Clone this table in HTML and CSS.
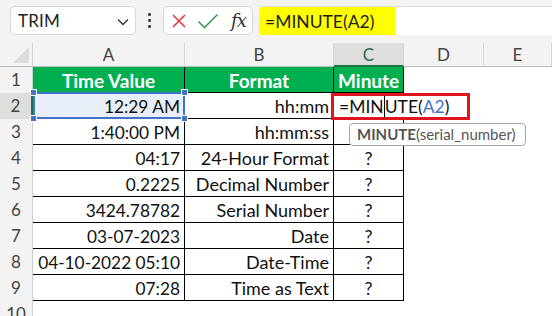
FILE: index.html
```html
<!DOCTYPE html>
<html>
<head>
<meta charset="utf-8">
<link rel="stylesheet" href="styles.css">
</head>
<body>
<div class="app">
  <div class="toolbar">
    <div class="namebox">
      <span class="name">TRIM</span>
      <svg class="chev" width="12" height="8" viewBox="0 0 12 8"><path d="M1 1.5 L6 6.5 L11 1.5" fill="none" stroke="#333" stroke-width="1.4"/></svg>
    </div>
    <div class="dots"><span></span><span></span><span></span></div>
    <div class="btns">
      <svg width="16" height="16" viewBox="0 0 16 16"><path d="M2 2 L14 14 M14 2 L2 14" stroke="#e0383a" stroke-width="1.6" fill="none"/></svg>
      <svg width="22" height="16" viewBox="0 0 22 16"><path d="M1.5 8.5 L7.5 14.5 L20.5 1.5" stroke="#3f9a5a" stroke-width="1.6" fill="none"/></svg>
      <span class="fx">fx</span>
    </div>
    <div class="formula"><span class="hl">=MINUTE(A2)</span></div>
  </div>
  <div class="sheet">
    <div class="corner"><div class="tri"></div></div>
    <div class="ch">A</div><div class="ch">B</div><div class="ch sel">C</div><div class="ch">D</div><div class="ch">E</div>

    <div class="rh">1</div>
    <div class="c hd">Time Value</div><div class="c hd">Format</div><div class="c hd">Minute</div><div class="e"></div><div class="e"></div>

    <div class="rh sel">2</div>
    <div class="c r n a2">12:29 AM</div><div class="c r">hh:mm</div><div class="c ctr"></div><div class="e"></div><div class="e"></div>

    <div class="rh">3</div>
    <div class="c r n">1:40:00 PM</div><div class="c r">hh:mm:ss</div><div class="c ctr"></div><div class="e"></div><div class="e"></div>

    <div class="rh">4</div>
    <div class="c r n">04:17</div><div class="c r">24-Hour Format</div><div class="c ctr">?</div><div class="e"></div><div class="e"></div>

    <div class="rh">5</div>
    <div class="c r n">0.2225</div><div class="c r">Decimal Number</div><div class="c ctr">?</div><div class="e"></div><div class="e"></div>

    <div class="rh">6</div>
    <div class="c r n">3424.78782</div><div class="c r">Serial Number</div><div class="c ctr">?</div><div class="e"></div><div class="e"></div>

    <div class="rh">7</div>
    <div class="c r n">03-07-2023</div><div class="c r">Date</div><div class="c ctr">?</div><div class="e"></div><div class="e"></div>

    <div class="rh">8</div>
    <div class="c r n">04-10-2022 05:10</div><div class="c r">Date-Time</div><div class="c ctr">?</div><div class="e"></div><div class="e"></div>

    <div class="rh">9</div>
    <div class="c r n">07:28</div><div class="c r">Time as Text</div><div class="c ctr">?</div><div class="e"></div><div class="e"></div>

    <div class="rh">10</div>
    <div class="e"></div><div class="e"></div><div class="e"></div><div class="e"></div><div class="e"></div>

    <div class="refbox"><i class="h tl"></i><i class="h tr"></i><i class="h bl"></i><i class="h br"></i></div>
    <div class="editor">=MIN<span class="caret"></span>UTE(<span class="ref">A2</span>)</div>
    <div class="tip"><b>MINUTE</b>(serial_number)</div>
  </div>
</div>
</body>
</html>
```
FILE: styles.css
```css
html, body {
  margin: 0;
  padding: 0;
  background: #fff;
}
.app {
  width: 552px;
  height: 316px;
  overflow: hidden;
  font-family: Lato, "Open Sans", sans-serif;
  color: #222;
}
.toolbar {
  height: 43px;
  box-sizing: border-box;
  background: #f3f3f3;
  display: flex;
  align-items: flex-start;
  padding: 6px 0 0 10px;
}
.namebox {
  width: 126px;
  height: 29px;
  box-sizing: border-box;
  background: #fff;
  border: 1px solid #d6d6d6;
  border-radius: 5px;
  display: flex;
  align-items: center;
  justify-content: space-between;
  padding: 0 6px 0 7px;
}
.name {
  font-size: 17px;
  color: #222;
  letter-spacing: 0.2px;
}
.chev {
  margin-top: 2px;
}
.dots {
  width: 27px;
  height: 29px;
  display: flex;
  flex-direction: column;
  align-items: center;
  justify-content: center;
  gap: 3px;
}
.dots span {
  width: 3px;
  height: 3px;
  background: #444;
  border-radius: 1px;
}
.btns {
  width: 90px;
  height: 29px;
  box-sizing: border-box;
  background: #fff;
  border: 1px solid #d6d6d6;
  border-radius: 5px;
  display: flex;
  align-items: center;
  padding: 0 4px 0 7px;
  gap: 10px;
}
.fx {
  font-family: "DejaVu Serif", "Liberation Serif", serif;
  font-style: italic;
  font-size: 18px;
  color: #333;
  margin-left: 2px;
  letter-spacing: -1px;
}
.formula {
  flex: 1;
  height: 29px;
  margin-left: 6px;
  background: #fff;
  border-top: 1px solid #e0e0e0;
  box-sizing: border-box;
  display: flex;
  align-items: stretch;
}
.hl {
  background: #ffff00;
  width: 136px;
  box-sizing: border-box;
  padding: 3px 0 0 6px;
  font-size: 17.5px;
  line-height: 24px;
  color: #222;
  border-radius: 3px 0 0 3px;
}
.sheet {
  position: relative;
  display: grid;
  grid-template-columns: 33px 152px 149px 70px 80px 68px;
  grid-template-rows: 24px repeat(10, 26px);
  font-size: 18px;
}
.corner {
  background: #f3f3f3;
  border-right: 1px solid #d4d4d4;
  border-bottom: 1px solid #bdbdbd;
  position: relative;
}
.tri {
  position: absolute;
  right: 3px;
  bottom: 3px;
  width: 0;
  height: 0;
  border-left: 16px solid transparent;
  border-bottom: 16px solid #dcdcdc;
}
.ch {
  background: #f3f3f3;
  border-right: 1px solid #d6d6d6;
  border-bottom: 1px solid #bdbdbd;
  text-align: center;
  line-height: 24px;
  font-size: 17px;
  color: #444;
}
.ch.sel {
  background: #dedede;
  color: #1e7145;
  border-bottom: 2px solid #1e7145;
}
.rh {
  background: #f3f3f3;
  border-right: 1px solid #cfcfcf;
  text-align: center;
  line-height: 26px;
  font-size: 17px;
  color: #444;
}
.rh.sel {
  background: #dedede;
  border-right: 2px solid #1e7145;
}
.c {
  border-right: 1px solid #000;
  border-bottom: 1px solid #000;
  box-sizing: border-box;
  padding: 2px 4px 0 4px;
  line-height: 23px;
  white-space: nowrap;
  overflow: hidden;
  color: #111;
}
.c.n { font-size: 17.3px; }
.c.r { text-align: right; }
.c.ctr { text-align: center; }
.c.hd {
  background: #00b050;
  color: #fff;
  font-weight: 700;
  font-size: 19px;
  text-align: center;
}
.c.a2 {
  background: #e9eff9;
}
.refbox {
  position: absolute;
  left: 33px;
  top: 49px;
  width: 152px;
  height: 27px;
  box-sizing: border-box;
  border: 2px solid #4472c4;
}
.h {
  position: absolute;
  width: 5px;
  height: 5px;
  background: #4472c4;
  border: 1px solid #fff;
}
.h.tl { left: -5px; top: -5px; }
.h.tr { right: -5px; top: -5px; }
.h.bl { left: -5px; bottom: -5px; }
.h.br { right: -5px; bottom: -5px; }
.editor {
  position: absolute;
  left: 331px;
  top: 50px;
  width: 139px;
  height: 27px;
  box-sizing: border-box;
  border: 3px solid #e0141e;
  background: #fff;
  padding: 0 0 0 5px;
  line-height: 22px;
  font-size: 17.5px;
  color: #111;
  white-space: nowrap;
}
.caret {
  display: inline-block;
  width: 1px;
  height: 22px;
  background: #000;
  vertical-align: top;
}
.ref { color: #4472c4; }
.tip {
  position: absolute;
  left: 349px;
  top: 80px;
  width: 177px;
  height: 23px;
  box-sizing: border-box;
  border: 1px solid #a6a6a6;
  border-radius: 4px;
  background: #fff;
  padding: 0 0 0 7px;
  font-size: 15px;
  line-height: 21px;
  color: #555;
  white-space: nowrap;
}
.tip b { color: #555; }
```
